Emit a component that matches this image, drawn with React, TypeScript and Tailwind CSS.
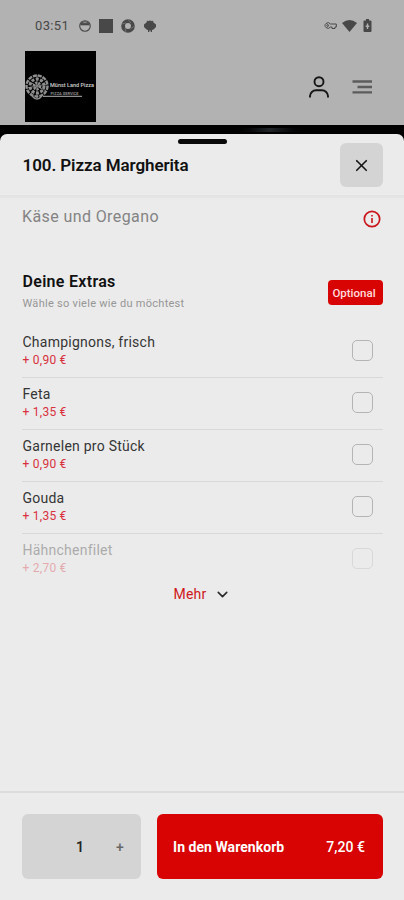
import { useState } from "react";
import { ChevronDown, X } from "lucide-react";

interface Extra {
  id: number;
  name: string;
  price: string;
}

const extras: Extra[] = [
  { id: 1, name: "Champignons, frisch", price: "+ 0,90 €" },
  { id: 2, name: "Feta", price: "+ 1,35 €" },
  { id: 3, name: "Garnelen pro Stück", price: "+ 0,90 €" },
  { id: 4, name: "Gouda", price: "+ 1,35 €" },
  { id: 5, name: "Hähnchenfilet", price: "+ 2,70 €" },
];

function StatusBar() {
  return (
    <div className="flex h-[51px] items-center justify-between pl-[35px] pr-8 text-[#484848]">
      <div className="flex items-center">
        <span className="w-[43px] text-[13px] tracking-[0.35px]">03:51</span>
        <svg className="ml-px size-3" viewBox="0 0 12 12" fill="none" stroke="currentColor">
          <circle cx="6" cy="6" r="5.3" strokeWidth="1.1" />
          <path d="M1.500 4.200H10.500" strokeWidth="2.200" />
          <path d="M3 2.500Q6 1 9 2.500" strokeWidth="1" />
        </svg>
        <span className="ml-2 size-3.5 bg-current" />
        <svg className="ml-2 size-[14px]" viewBox="0 0 14 14" fill="none" stroke="currentColor">
          <circle cx="7" cy="7" r="4.900" strokeWidth="3.800" />
          <path d="M7 0.500L10 4M13.500 7L9.500 10M5 13.500L4 9M0.500 5L5 4" stroke="#8b8b8b" strokeWidth="0.600" />
        </svg>
        <svg className="ml-2 size-[14px]" viewBox="0 0 14 14" fill="currentColor">
          <path d="M4 1.500L5 2.200Q7 0.800 9 2.200L10 1.500L10.500 3.500L13 5.500V8L10.500 10.500L9 11V13H7.700V11.500H6.300V13H5V11L3.500 10.500L1 8V5.500L3.500 3.500Z" />
        </svg>
      </div>
      <div className="flex items-center">
        <svg className="h-[9px] w-[13px]" viewBox="0 0 13 9" fill="none" stroke="currentColor" strokeWidth="1">
          <path d="M6.500 3A3 2.700 0 1 0 6.500 6H8V7.500H11V6H12.300V3Z" />
          <circle cx="3.700" cy="4.500" r="0.900" />
        </svg>
        <svg className="ml-[5px] h-3 w-[15px]" viewBox="0 0 15 12" fill="currentColor">
          <path d="M0 3Q7.500 -3 15 3L7.500 12Z" />
        </svg>
        <svg className="ml-1.5 h-[13px] w-[9px]" viewBox="0 0 9 13">
          <path d="M3 0H6V1.500H7.500Q8.500 1.500 8.500 2.500V12Q8.500 13 7.500 13H1.500Q0.500 13 0.500 12V2.500Q0.500 1.500 1.500 1.500H3Z" fill="currentColor" />
          <path d="M4.500 4.500V10M2.700 7.200H6.300" stroke="#b2b2b2" strokeWidth="1.400" />
        </svg>
      </div>
    </div>
  );
}

function Logo() {
  return (
    <svg className="size-[71px] bg-black" viewBox="0 0 71 71">
      <g fill="none" stroke="#8e8e8e">
        <circle cx="12" cy="35" r="10.500" strokeWidth="2.400" strokeDasharray="4 1" />
        <circle cx="12" cy="35" r="7" strokeWidth="3" strokeDasharray="3 1.500" />
        <circle cx="12" cy="35" r="3" strokeWidth="2.800" strokeDasharray="2 1" />
        <path d="M3 30L21 40M6 43L18 27M12 24V47M2 37L22 33" strokeWidth="0.800" />
        <path d="M7 45Q12 51 17 45M18 45.300H57" strokeWidth="1.300" />
      </g>
      <text x="25" y="35.500" textLength="44" lengthAdjust="spacingAndGlyphs" className="fill-[#d2d2d2] text-[5.500px] font-medium">
        Münst Land Pizza
      </text>
      <text x="25.500" y="44" textLength="28" lengthAdjust="spacingAndGlyphs" className="fill-[#8d8d8d] text-[4px] font-bold">
        PIZZA SERVICE
      </text>
    </svg>
  );
}

function Header() {
  return (
    <div className="flex h-[74px] justify-between pl-[24.500px] pr-[32.500px]">
      <Logo />
      <div className="flex h-[71px] items-center gap-[22px]">
        <svg className="size-[22px]" viewBox="0 0 22 22" fill="none" stroke="#161616" strokeWidth="1.9">
          <circle cx="11" cy="5.700" r="4.500" />
          <path d="M2 21.500V20A6 6 0 0 1 8 14.300H14A6 6 0 0 1 20 20V21.500" />
        </svg>
        <svg className="h-4 w-5" viewBox="0 0 20 16" stroke="#5c5c5c" strokeWidth="2.300">
          <path d="M0.500 2.500H20M5.500 8H20M0.500 13.300H20" />
        </svg>
      </div>
    </div>
  );
}

function ExtraRow({ extra, faded, checked, onToggle }: { extra: Extra; faded: boolean; checked: boolean; onToggle: () => void }) {
  return (
    <label className={`flex h-[52px] justify-between pr-2.5 ${faded ? "opacity-35" : "border-b border-[#d8d8d8]"}`}>
      <span className="pl-[0.5px] pt-2">
        <span className="block text-[14px] leading-[17px] tracking-[0.24px] text-[#353535]">{extra.name}</span>
        <span className="block text-[12px] leading-[18px] tracking-[0.25px] text-[#d8303c]">{extra.price}</span>
      </span>
      <input
        type="checkbox"
        checked={checked}
        onChange={onToggle}
        className="mt-[14px] size-[21px] appearance-none rounded-[5px] border-[1.500px] border-[#b4b4b4] checked:bg-[#d80404]"
      />
    </label>
  );
}

export default function App() {
  const [selected, setSelected] = useState<number[]>([]);
  const [quantity, setQuantity] = useState(1);

  const toggle = (id: number) => {
    setSelected((prev) => (prev.includes(id) ? prev.filter((x) => x !== id) : [...prev, id]));
  };

  return (
    <div className="flex h-[900px] w-[404px] flex-col overflow-hidden bg-black font-['Roboto',sans-serif]">
      <div className="h-[125px] shrink-0 bg-[#b2b2b2]">
        <StatusBar />
        <Header />
      </div>
      <div className="flex h-[9px] shrink-0 items-center justify-center">
        <div className="ml-[136px] h-1 w-20 bg-linear-to-r from-black via-[#222629] to-black" />
      </div>

      <div className="flex flex-1 flex-col rounded-t-[7px] bg-[#ebebeb]">
        <div className="h-[64px] shrink-0 border-b-[3px] border-[#e4e4e4] pl-[22.500px] pr-[21px] pt-[5px]">
          <div className="ml-[155.500px] h-[5px] w-[49px] rounded-full bg-[#090909]" />
          <div className="-mt-px flex h-[44px] items-center justify-between">
            <h1 className="pt-px text-[17px] font-semibold tracking-[-0.08px] text-[#111]">100. Pizza Margherita</h1>
            <button className="flex h-[44px] w-[43px] items-center justify-center rounded-md bg-[#d4d4d4]">
              <X className="size-[19px] text-[#151515]" strokeWidth={2.1} />
            </button>
          </div>
        </div>

        <div className="flex flex-1 flex-col pl-[22px] pr-[21px]">
          <div className="flex h-[74px] justify-between pr-[2px] pt-[8px]">
            <p className="text-[16px] leading-[22px] tracking-[0.4px] text-[#838383]">Käse und Oregano</p>
            <svg className="mt-[4px] size-[18px]" viewBox="0 0 18 18" fill="none" stroke="#c9151b">
              <circle cx="9" cy="9" r="7.700" strokeWidth="1.700" />
              <path d="M9 8V13M9 5V6.600" strokeWidth="1.600" />
            </svg>
          </div>
          <div className="flex h-[54px] justify-between">
            <div className="pl-[0.5px]">
              <h2 className="text-[16px] font-semibold leading-5 tracking-[0.3px] text-[#111]">Deine Extras</h2>
              <p className="mt-[3px] text-[11px] leading-[18px] tracking-[0.28px] text-[#969696]">Wähle so viele wie du möchtest</p>
            </div>
            <span className="mt-[8px] flex h-[25px] w-[55px] items-center justify-center rounded bg-[#d80404] pr-[3px] pt-[2px] text-[11.500px] font-medium text-[#ffdddd]">
              Optional
            </span>
          </div>
          <div className="h-[252px]">
            {extras.map((extra, i) => (
              <ExtraRow
                key={extra.id}
                extra={extra}
                faded={i === extras.length - 1}
                checked={selected.includes(extra.id)}
                onToggle={() => toggle(extra.id)}
              />
            ))}
          </div>
          <button className="flex h-[32px] items-center justify-center gap-[7px] pr-px text-[14px] tracking-[0.25px] text-[#cf1720]">
            Mehr
            <ChevronDown className="size-[17px] text-[#292929]" strokeWidth={2.2} />
          </button>
        </div>

        <div className="flex h-[109px] shrink-0 justify-between border-t-2 border-[#dcdcdc] pl-[22px] pr-[21px] pt-[21px]">
          <div className="flex h-[65px] w-[119px] items-center rounded-md bg-[#d4d4d4] pt-px">
            <span className="ml-[54px] w-[10px] text-[14px] font-semibold text-[#242424]">{quantity}</span>
            <button className="ml-[30px] text-[14px] font-medium text-[#686868]" onClick={() => setQuantity(quantity + 1)}>
              +
            </button>
          </div>
          <button className="flex h-[65px] w-[226px] items-center justify-between rounded-md bg-[#d80404] pl-4 pr-[18px] pt-px text-[14px] font-bold tracking-[0.05px] text-white">
            <span>In den Warenkorb</span>
            <span className="font-medium">7,20 €</span>
          </button>
        </div>
      </div>
    </div>
  );
}
